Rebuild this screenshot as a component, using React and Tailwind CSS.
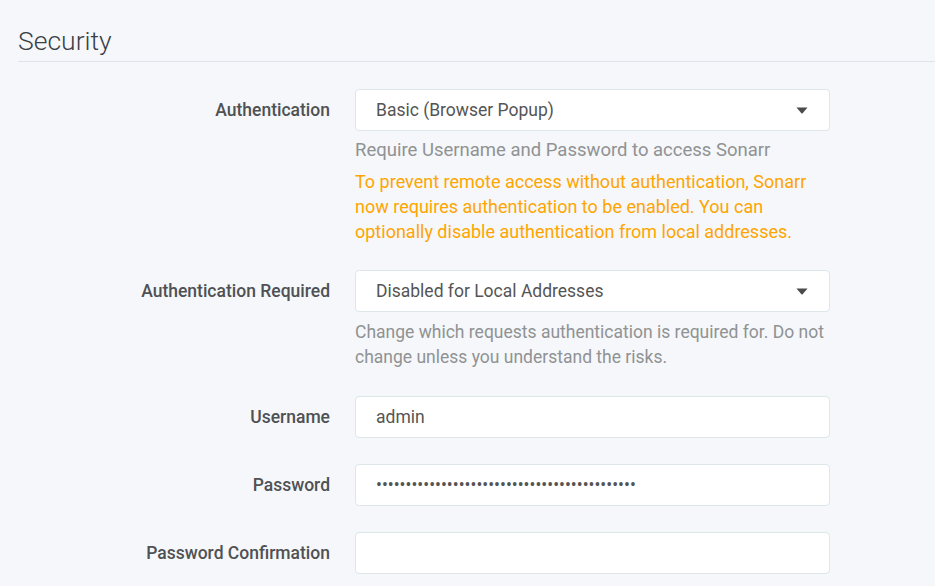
const font = { fontFamily: 'Roboto, "Open Sans", sans-serif' }

function Caret() {
  return (
    <svg width="12" height="7" viewBox="0 0 12 7" className="shrink-0">
      <path d="M0.5 0.5h11L6.6 6.2a0.8 0.8 0 0 1-1.2 0z" fill="#4b4b4b" />
    </svg>
  )
}

function Field({ label, children, help }) {
  return (
    <div className="mb-[26px] flex items-start">
      <div className="flex h-[42px] w-[312px] shrink-0 items-center justify-end text-[17.5px] font-medium text-[#4f5154]">
        {label}
      </div>
      <div className="ml-[25px] w-[475px]">
        {children}
        {help}
      </div>
    </div>
  )
}

function SelectBox({ value }) {
  return (
    <div className="flex h-[42px] items-center justify-between rounded-[4px] border border-[#dde6e9] bg-white pl-[20px] pr-[21px] text-[17.5px] text-[#555]">
      <span>{value}</span>
      <Caret />
    </div>
  )
}

function TextBox({ value, type = 'text' }) {
  return (
    <input
      type={type}
      readOnly
      defaultValue={value}
      className="block h-[42px] w-full rounded-[4px] border border-[#dde6e9] bg-white px-[20px] text-[17.5px] text-[#555] outline-none"
      style={font}
    />
  )
}

export default function App() {
  return (
    <div className="min-h-[586px] bg-[#f5f7fa] pl-[18px]" style={font}>
      <div className="border-b border-[#dfe4ea] pt-[23px] pb-[2px] text-[26.5px] leading-[36px] font-light text-[#3a3f47]">
        Security
      </div>

      <div className="mt-[27px]">
        <Field
          label="Authentication"
          help={
            <div className="mt-[7px] text-[18px] leading-[25px]">
              <div className="text-[18.5px] text-[#909293]">Require Username and Password to access Sonarr</div>
              <div className="mt-[6px] text-[#ffa500]">
                To prevent remote access without authentication, Sonarr now requires authentication to be enabled. You can optionally disable authentication from local addresses.
              </div>
            </div>
          }
        >
          <SelectBox value="Basic (Browser Popup)" />
        </Field>

        <Field
          label="Authentication Required"
          help={
            <div className="mt-[8px] text-[17.5px] leading-[25px] text-[#909293]">
              Change which requests authentication is required for. Do not change unless you understand the risks.
            </div>
          }
        >
          <SelectBox value="Disabled for Local Addresses" />
        </Field>

        <Field label="Username">
          <TextBox value="admin" />
        </Field>

        <Field label="Password">
          <TextBox type="password" value="xxxxxxxxxxxxxxxxxxxxxxxxxxxxxxxxxxxxxxxxxxxx" />
        </Field>

        <Field label="Password Confirmation">
          <TextBox type="password" value="" />
        </Field>
      </div>
    </div>
  )
}
